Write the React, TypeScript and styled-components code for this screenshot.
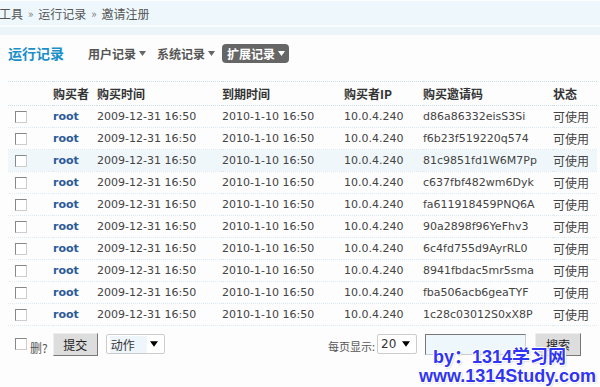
import styled, { createGlobalStyle } from "styled-components";

const GlobalStyle = createGlobalStyle`
  html, body {
    margin: 0;
    padding: 0;
    background: #fdfdfd;
  }
  body {
    font-family: "DejaVu Sans", "Noto Sans CJK SC", sans-serif;
    font-size: 12px;
    color: #444;
  }
`;

const cjk = `"Noto Sans CJK SC", "DejaVu Sans", sans-serif`;

const Page = styled.div`
  position: relative;
  width: 600px;
  height: 387px;
  overflow: hidden;
`;

const Crumbs = styled.div`
  height: 24px;
  margin-top: 1px;
  display: flex;
  align-items: center;
  gap: 5px;
  background: #eef7fb;
  border-bottom: 2px solid #f8fcfd;
  font-family: ${cjk};
  font-size: 12px;
  color: #555;
  & span {
    margin-left: -1px;
  }
  & i {
    font-style: normal;
    color: #777;
    font-size: 11px;
  }
`;

const Band = styled.div`
  height: 8px;
  background: #eaf4f9;
`;

const TitleBar = styled.div`
  display: flex;
  align-items: center;
  height: 28px;
  margin-top: 4px;
  padding-left: 8px;
`;

const Title = styled.h1`
  margin: 0 20px 0 0;
  font-family: ${cjk};
  font-size: 14px;
  font-weight: bold;
  color: #1a8fc9;
`;

const Nav = styled.div`
  display: flex;
  align-items: center;
  gap: 7px;
`;

const NavItem = styled.a<{ $active?: boolean }>`
  display: flex;
  align-items: center;
  gap: 3px;
  height: 19px;
  margin-left: ${(p) => (p.$active ? "0" : "4px")};
  padding: ${(p) => (p.$active ? "0 4px 0 5px" : "0")};
  border-radius: 4px;
  background: ${(p) => (p.$active ? "#666" : "transparent")};
  color: ${(p) => (p.$active ? "#fff" : "#555")};
  font-family: ${cjk};
  font-size: 12px;
  font-weight: bold;
  text-decoration: none;
  & svg {
    fill: ${(p) => (p.$active ? "#fff" : "#666")};
  }
`;

const Table = styled.table`
  margin: 14px 0 0 8px;
  width: 589px;
  border-collapse: collapse;
  table-layout: fixed;
`;

const Head = styled.th`
  height: 23px;
  padding: 0;
  text-align: left;
  font-family: ${cjk};
  font-size: 12px;
  font-weight: bold;
  color: #333;
  border-top: 1px dotted #c8e0ee;
  border-bottom: 1px dotted #c8e0ee;
`;

const Row = styled.tr<{ $hl?: boolean }>`
  background: ${(p) => (p.$hl ? "#f0f7fb" : "transparent")};
  & td {
    height: 21px;
    padding: 0;
    border-bottom: 1px dotted #dbeaf3;
    white-space: nowrap;
    overflow: hidden;
  }
`;

const Cell = styled.td<{ $cjk?: boolean }>`
  font-family: ${(p) => (p.$cjk ? cjk : `"DejaVu Sans", sans-serif`)};
  font-size: ${(p) => (p.$cjk ? "12px" : "11px")};
  color: #444;
`;

const User = styled.td`
  font-family: "DejaVu Sans", sans-serif;
  font-size: 11px;
  font-weight: bold;
  color: #2c5a98;
`;

const Box = styled.span<{ $flush?: boolean }>`
  display: inline-block;
  width: 10px;
  height: 10px;
  margin-left: ${(p) => (p.$flush ? "0" : "7px")};
  vertical-align: middle;
  background: #fff;
  border: 1px solid;
  border-color: #888 #ccc #ccc #888;
`;

const Footer = styled.div`
  display: flex;
  align-items: center;
  margin-top: 6px;
  height: 24px;
  padding-left: 15px;
`;

const Label = styled.span`
  font-family: ${cjk};
  font-size: 12px;
  color: #555;
  margin: 6px 5px 0 3px;
`;

const Button = styled.button<{ $w: number }>`
  width: ${(p) => p.$w}px;
  height: 23px;
  padding: 0;
  background: #ddd;
  border: 1px solid;
  border-color: #eee #777 #777 #eee;
  font-family: ${cjk};
  font-size: 12px;
  color: #222;
`;

const Select = styled.div<{ $w: number; $gap?: number }>`
  display: flex;
  align-items: center;
  justify-content: space-between;
  box-sizing: border-box;
  width: ${(p) => p.$w}px;
  height: 20px;
  margin-left: ${(p) => p.$gap ?? 0}px;
  padding: 0 6px 0 3px;
  background: #fff;
  border: 1px solid #ccc;
  border-radius: 2px;
  font-family: ${cjk};
  font-size: 12px;
  color: #333;
  & b {
    font-weight: normal;
    padding: 0 12px 0 1px;
    background: #eef6fb;
  }
  & span {
    font-family: "DejaVu Sans", sans-serif;
  }
`;

const Right = styled.div`
  display: flex;
  align-items: center;
  margin-left: auto;
  margin-right: 19px;
`;

const Small = styled.span`
  font-family: ${cjk};
  font-size: 11px;
  color: #555;
  margin: 3px 2px 0 0;
`;

const Input = styled.div`
  width: 99px;
  height: 19px;
  margin: 1px 9px 0 8px;
  background: #eef7fb;
  border: 1px solid;
  border-color: #777 #ccc #ccc #777;
`;

const Watermark = styled.div`
  position: absolute;
  right: 4px;
  bottom: 1px;
  display: flex;
  flex-direction: column;
  align-items: center;
  font-family: "Liberation Sans", "Noto Sans CJK SC", sans-serif;
  font-size: 18px;
  font-weight: bold;
  line-height: 19px;
  color: #2f35f2;
  text-shadow: 1px 1px 0 #fff, -1px -1px 0 #fff, 1px -1px 0 #fff,
    -1px 1px 0 #fff, 1px 1px 2px #aab;
  & span:first-child {
    margin-right: 16px;
  }
`;

const Arrow = ({ size = 7 }: { size?: number }) => (
  <svg width={size} height={size - 2} viewBox="0 0 7 5">
    <path d="M0 0h7L3.5 5z" />
  </svg>
);

const rows = [
  "d86a86332eisS3Si",
  "f6b23f519220q574",
  "81c9851fd1W6M7Pp",
  "c637fbf482wm6Dyk",
  "fa611918459PNQ6A",
  "90a2898f96YeFhv3",
  "6c4fd755d9AyrRL0",
  "8941fbdac5mr5sma",
  "fba506acb6geaTYF",
  "1c28c03012S0xX8P",
];

const widths = [45, 44, 125, 122, 79, 130, 44];

export default function App() {
  return (
    <Page>
      <GlobalStyle />
      <Crumbs>
        <span>工具</span>
        <i>»</i>
        运行记录
        <i>»</i>
        邀请注册
      </Crumbs>
      <Band />
      <TitleBar>
        <Title>运行记录</Title>
        <Nav>
          <NavItem>
            用户记录
            <Arrow />
          </NavItem>
          <NavItem>
            系统记录
            <Arrow />
          </NavItem>
          <NavItem $active>
            扩展记录
            <Arrow />
          </NavItem>
        </Nav>
      </TitleBar>
      <Table>
        <colgroup>
          {widths.map((w, i) => (
            <col key={i} style={{ width: w }} />
          ))}
        </colgroup>
        <thead>
          <tr>
            <Head />
            <Head>购买者</Head>
            <Head>购买时间</Head>
            <Head>到期时间</Head>
            <Head>购买者IP</Head>
            <Head>购买邀请码</Head>
            <Head>状态</Head>
          </tr>
        </thead>
        <tbody>
          {rows.map((code, i) => (
            <Row key={code} $hl={i === 2}>
              <td>
                <Box />
              </td>
              <User>root</User>
              <Cell>2009-12-31 16:50</Cell>
              <Cell>2010-1-10 16:50</Cell>
              <Cell>10.0.4.240</Cell>
              <Cell>{code}</Cell>
              <Cell $cjk>可使用</Cell>
            </Row>
          ))}
        </tbody>
      </Table>
      <Footer>
        <Box $flush />
        <Label>删?</Label>
        <Button $w={45}>提交</Button>
        <Select $w={59} $gap={8}>
          <b>动作</b>
          <Arrow size={8} />
        </Select>
        <Right>
          <Small>每页显示:</Small>
          <Select $w={40}>
            <span>20</span>
            <Arrow size={8} />
          </Select>
          <Input />
          <Button $w={46}>搜索</Button>
        </Right>
      </Footer>
      <Watermark>
        <span>by：1314学习网</span>
        <span>www.1314Study.com</span>
      </Watermark>
    </Page>
  );
}
